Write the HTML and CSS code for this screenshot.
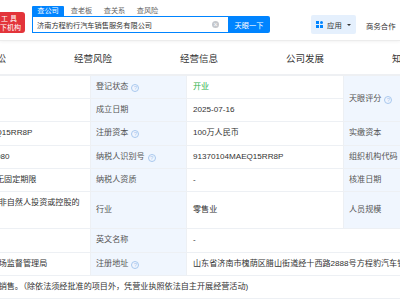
FILE: index.html
```html
<!DOCTYPE html>
<html lang="zh-CN">
  <head>
    <meta charset="UTF-8" />
    <meta name="viewport" content="width=device-width, initial-scale=1.0" />
    <title>济南方程豹行汽车销售服务有限公司 - 工商信息</title>
    <link rel="stylesheet" href="styles.css">
  </head>
  <body>
    <header class="topbar">
      <div class="logo">
        <span class="logo-l1">工 具</span>
        <span>天下机构</span>
      </div>

      <div class="search">
        <div class="search-tabs">
          <span class="search-tab ativo">查公司</span>
          <span class="search-tab">查老板</span>
          <span class="search-tab">查关系</span>
          <span class="search-tab">查风险</span>
        </div>
        <div class="search-row">
          <div class="search-input">
            <span>济南方程豹行汽车销售服务有限公司</span>
            <i class="clear">×</i>
          </div>
          <button type="button">天眼一下</button>
        </div>
      </div>

      <div class="apps">
        <span class="apps-icon"><i></i><i></i><i></i><i></i></span>
        <span>应用</span>
        <span class="caret"></span>
      </div>
      <a class="biz" href="#">商务合作</a>
    </header>

    <nav class="menu">
      <a href="#">法律诉讼</a>
      <a href="#">经营风险</a>
      <a href="#">经营信息</a>
      <a href="#">公司发展</a>
      <a href="#">知识产权</a>
    </nav>

    <table class="info">
      <colgroup>
        <col class="c-a" />
        <col class="c-b" />
        <col class="c-c" />
        <col class="c-d" />
        <col class="c-e" />
      </colgroup>
      <tr>
        <td></td>
        <td class="label">登记状态<i class="tip">?</i></td>
        <td class="verde">开业</td>
        <td class="label" rowspan="2">天眼评分<i class="tip">?</i></td>
        <td rowspan="2"></td>
      </tr>
      <tr>
        <td></td>
        <td class="label">成立日期</td>
        <td>2025-07-16</td>
      </tr>
      <tr>
        <td>91370104MAEQ15RR8P</td>
        <td class="label">注册资本<i class="tip">?</i></td>
        <td>100万人民币</td>
        <td class="label">实缴资本</td>
        <td>-</td>
      </tr>
      <tr>
        <td>370104200000080</td>
        <td class="label">纳税人识别号<i class="tip">?</i></td>
        <td>91370104MAEQ15RR8P</td>
        <td class="label">组织机构代码</td>
        <td>MAEQ15RR-8</td>
      </tr>
      <tr>
        <td>2025-07-16 至 无固定期限</td>
        <td class="label">纳税人资质</td>
        <td>-</td>
        <td class="label">核准日期</td>
        <td>2025-07-16</td>
      </tr>
      <tr>
        <td>有限责任公司（非自然人投资或控股的法人独资）</td>
        <td class="label">行业</td>
        <td>零售业</td>
        <td class="label">人员规模</td>
        <td>-</td>
      </tr>
      <tr>
        <td></td>
        <td class="label">英文名称</td>
        <td colspan="3">-</td>
      </tr>
      <tr>
        <td>济南市槐荫区市场监督管理局</td>
        <td class="label">注册地址<i class="tip">?</i></td>
        <td colspan="3" class="nowrap">山东省济南市槐荫区腊山街道经十西路2888号方程豹汽车销售中心</td>
      </tr>
      <tr>
        <td colspan="5" class="nowrap">一般项目：新车销售。（除依法须经批准的项目外，凭营业执照依法自主开展经营活动)</td>
      </tr>
    </table>
  </body>
</html>
```

FILE: styles.css
```css
* {
  margin: 0;
  padding: 0;
  box-sizing: border-box;
  font-family: "Liberation Sans", "Noto Sans CJK SC", sans-serif;
}

html,
body {
  width: 400px;
  height: 300px;
  overflow: hidden;
  background-color: #fff;
  color: #333;
}

a {
  color: inherit;
  text-decoration: none;
}

/* topo */
.topbar {
  display: flex;
  align-items: flex-start;
  height: 41px;
  border-bottom: 1px solid #ececec;
  box-shadow: 0 1px 3px rgba(0, 0, 0, 0.05);
}

.logo {
  display: flex;
  flex-direction: column;
  align-items: flex-end;
  width: 45px;
  height: 21px;
  margin: 12px 0 0 -20px;
  padding: 2px 4px 0 0;
  background-color: #e3343a;
  border-radius: 0 3px 3px 0;
  color: white;
  font-size: 7px;
  line-height: 9px;
}

.logo-l1 {
  margin-right: 4px;
}

.search {
  width: 238px;
  margin: 6px 0 0 7px;
}

.search-tabs {
  display: flex;
  height: 10px;
}

.search-tab {
  width: 33px;
  text-align: center;
  font-size: 7.2px;
  line-height: 10px;
  color: #666;
}

.search-tab.ativo {
  width: 32px;
  margin-right: 1px;
  background-color: #0084ff;
  border-radius: 1px 1px 0 0;
  color: white;
}

.search-row {
  display: flex;
  height: 17px;
}

.search-input {
  display: flex;
  align-items: center;
  justify-content: space-between;
  flex: 1;
  padding: 0 9px 0 4px;
  border: 1px solid #0084ff;
  border-right: 0;
  font-size: 7.2px;
  color: #333;
}

.clear {
  width: 7px;
  height: 7px;
  border-radius: 50%;
  background-color: #c4c7cc;
  color: white;
  font-style: normal;
  font-size: 7px;
  line-height: 7px;
  text-align: center;
}

.search-row button {
  width: 42px;
  background-color: #0084ff;
  border: 0;
  border-radius: 0 2px 2px 0;
  color: white;
  font-size: 7.2px;
}

.apps {
  display: flex;
  align-items: center;
  gap: 4px;
  width: 45px;
  height: 19px;
  margin: 15px 0 0 41px;
  padding-left: 5px;
  background-color: #e5f0fd;
  border-radius: 2px;
  font-size: 7.4px;
  color: #333;
}

.apps-icon {
  display: grid;
  grid-template-columns: 3px 3px;
  gap: 1px;
}

.apps-icon i {
  width: 3px;
  height: 3px;
  background-color: #0084ff;
}

.apps-icon i:nth-child(2) {
  border-radius: 50%;
}

.caret {
  width: 0;
  height: 0;
  margin-left: 1px;
  border-left: 2px solid transparent;
  border-right: 2px solid transparent;
  border-top: 2px solid #333;
}

.biz {
  margin: 20px 0 0 10px;
  font-size: 7.4px;
  white-space: nowrap;
}

/* menu das abas */
.menu {
  display: flex;
  margin: 3px 0 0 -66px;
  height: 32px;
  border-bottom: 2px solid #eef0f3;
}

.menu a {
  flex: 0 0 106px;
  text-align: center;
  font-size: 9.5px;
  line-height: 30px;
  color: #333;
}

/* tabela */
.info {
  width: 653px;
  margin-left: -65px;
  border-collapse: collapse;
  table-layout: fixed;
}

.c-a {
  width: 155px;
}

.c-b,
.c-d {
  width: 96px;
}

.c-c {
  width: 157px;
}

.c-e {
  width: 149px;
}

.info td {
  padding: 4px 6px;
  border: 1px solid #edf0f4;
  border-top: 0;
  font-size: 8.1px;
  line-height: 14.2px;
  color: #333;
  vertical-align: middle;
}

.info td.label {
  padding-left: 5px;
  background-color: #f0f6fe;
  color: #555;
}

.info td.verde {
  color: #2eb24a;
}

.nowrap {
  white-space: nowrap;
  overflow: hidden;
}

.tip {
  display: inline-block;
  width: 8px;
  height: 8px;
  margin-left: 3px;
  border: 1px solid #a9c8ee;
  border-radius: 50%;
  color: #a9c8ee;
  font-style: normal;
  font-size: 6px;
  line-height: 6px;
  text-align: center;
  vertical-align: -1px;
}
```
